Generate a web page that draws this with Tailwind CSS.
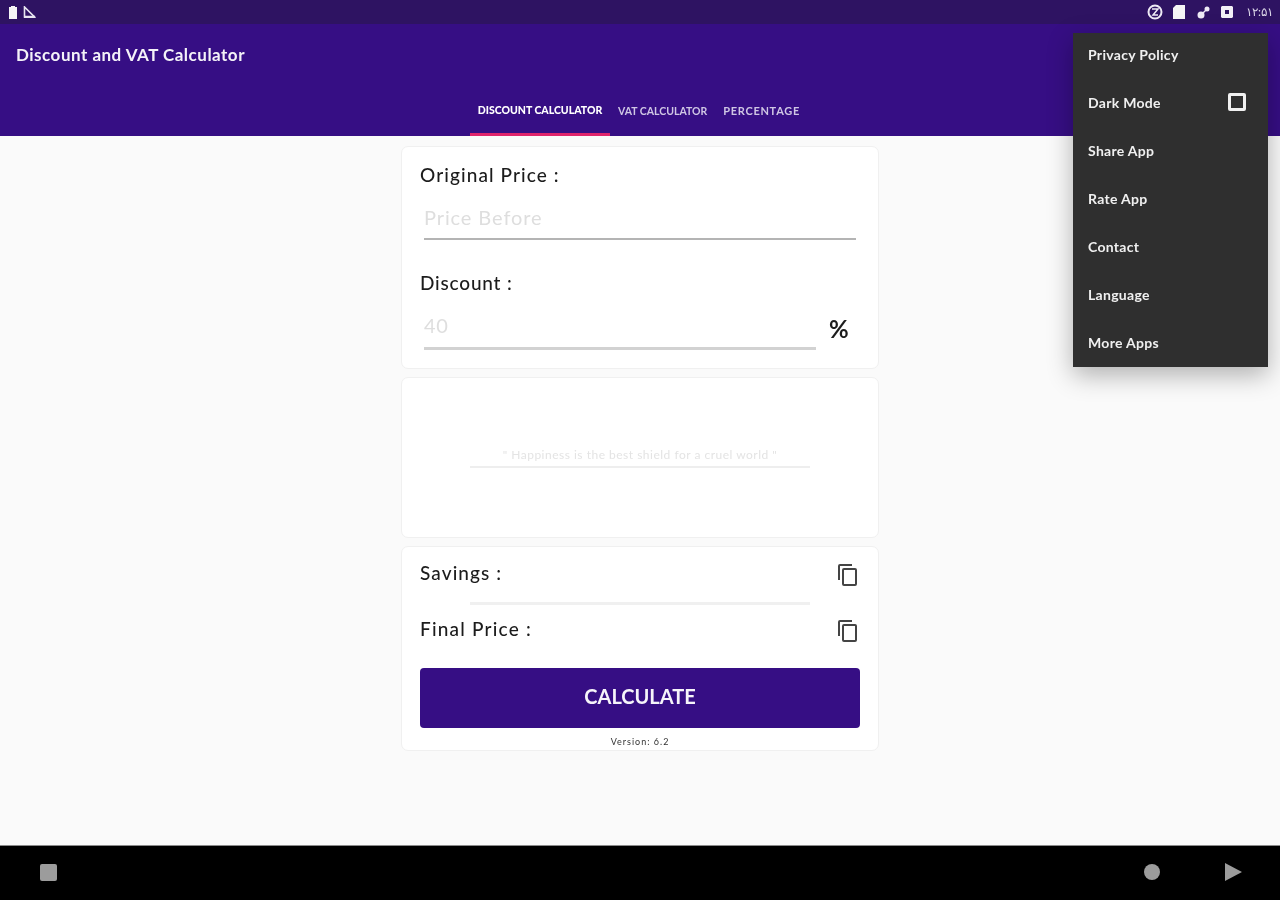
<!DOCTYPE html>
<html lang="en">
  <head>
    <meta charset="UTF-8" />
    <meta name="viewport" content="width=device-width, initial-scale=1.0" />
    <title>Discount and VAT Calculator</title>
    <script src="https://cdn.jsdelivr.net/npm/@tailwindcss/browser@4"></script>
  </head>
  <body class="bg-[#fafafa]">
    <div class="relative w-[1280px] h-[900px] overflow-hidden flex flex-col font-['Lato',sans-serif] blur-[0.5px]">
      <!-- status bar -->
      <div class="h-[24px] bg-[#2e1362] flex items-center justify-between pl-[8px] pr-[7px] text-white">
        <div class="flex items-center gap-[5px]">
          <svg width="10" height="13" viewBox="0 0 10 13" fill="#f5f5f5"><path d="M3 0h4v1h2v12H1V1h2z" /></svg>
          <svg width="13" height="12" viewBox="0 0 13 12" fill="none" stroke="#e8e6f0" stroke-width="1.6"><path d="M1.5 1v10h10z" /><path d="M1 11h11" stroke-width="2.5" /></svg>
        </div>
        <div class="flex items-center">
          <svg width="16" height="16" viewBox="0 0 16 16" fill="none" stroke="#eeeaf5" stroke-width="2"><circle cx="8" cy="8" r="6.5" /><path d="M5 5h6L6 11h5" stroke-width="1.5" /></svg>
          <svg class="ml-[10px]" width="12" height="14" viewBox="0 0 12 14" fill="#f5f5f5"><path d="M3 0h9v14H0V3z" /></svg>
          <svg class="ml-[12px]" width="13" height="13" viewBox="0 0 13 13" fill="#eeeaf5"><circle cx="4" cy="9" r="3.5" /><circle cx="10" cy="3" r="2.5" /><path d="M5 7l4-4 1 1-4 4z" /></svg>
          <svg class="ml-[11px]" width="12" height="12" viewBox="0 0 12 12" fill="#f2f0f7"><path fill-rule="evenodd" d="M1 0h10l1 1v10l-1 1H1l-1-1V1zM4 4v4h4V4z" /></svg>
          <span class="ml-[13px] text-[12px] leading-none text-[#d9d4e6]">۱۲:۵۱</span>
        </div>
      </div>

      <!-- app bar -->
      <div class="h-[112px] bg-[#360e84] flex flex-col shrink-0">
        <div class="h-[62px] pl-[16px] pt-[20px] text-[17px] leading-[22px] tracking-[0.5px] font-bold text-[#f4f2f8]">Discount and VAT Calculator</div>
        <div class="flex pl-[470px] h-[50px]">
          <div class="w-[140px] h-full border-b-[3px] border-[#e0246c] flex items-center justify-center pt-[3px] text-[10.5px] font-black text-white whitespace-nowrap">DISCOUNT CALCULATOR</div>
          <div class="ml-[8px] h-full flex items-center pt-[1px] text-[10.5px] font-bold text-[#cfc6e4] whitespace-nowrap">VAT CALCULATOR</div>
          <div class="ml-[16px] h-full flex items-center pt-[1px] text-[11px] tracking-[0.7px] font-bold text-[#cfc6e4] whitespace-nowrap">PERCENTAGE</div>
        </div>
      </div>

      <!-- content -->
      <div class="flex-1 bg-[#fafafa] flex flex-col items-center pt-[10px] gap-[8px]">
        <div class="w-[478px] h-[223px] bg-white rounded-[7px] border border-[#f0f0f0] flex flex-col pl-[18px] pr-[22px] text-[#1c1c1c]">
          <div class="mt-[15px] text-[19px] leading-[26px] tracking-[1.1px] font-medium">Original Price :</div>
          <div class="ml-[4px] mt-[16px] h-[28px] text-[20px] leading-[26px] tracking-[0.9px] text-[#dedede] border-b-2 border-[#b4b4b4] box-content pb-[6px]">Price Before</div>
          <div class="mt-[30px] text-[19px] leading-[26px] tracking-[0.8px] font-medium">Discount :</div>
          <div class="flex mt-[16px]">
            <div class="w-[392px] ml-[4px] h-[38px] text-[20px] leading-[26px] tracking-[0.6px] text-[#dedede] border-b-[3px] border-[#d2d2d2]">40</div>
            <div class="ml-[13px] mt-[2px] text-[24px] leading-[30px] font-bold text-[#1c1c1c]">%</div>
          </div>
        </div>

        <div class="w-[478px] h-[161px] bg-white rounded-[7px] border border-[#f0f0f0] flex justify-center pt-[69px]">
          <div class="w-[340px] h-[21px] border-b-2 border-[#eeeeee] text-center text-[12px] leading-[16px] tracking-[0.5px] text-[#e4e4e4] whitespace-nowrap">" Happiness is the best shield for a cruel world "</div>
        </div>

        <div class="w-[478px] h-[205px] bg-white rounded-[7px] border border-[#f0f0f0] flex flex-col px-[18px] text-[#1c1c1c]">
          <div class="flex justify-between items-center mt-[12px] h-[28px]">
            <div class="text-[19px] tracking-[1.1px] font-medium">Savings :</div>
            <svg class="mt-[3px]" width="24" height="24" viewBox="0 0 24 24" fill="#444"><path d="M16 1H4a2 2 0 0 0-2 2v14h2V3h12zm3 4H8a2 2 0 0 0-2 2v14a2 2 0 0 0 2 2h11a2 2 0 0 0 2-2V7a2 2 0 0 0-2-2zm0 16H8V7h11z" /></svg>
          </div>
          <div class="mx-[50px] mt-[15px] h-[3px] bg-[#f0f0f0]"></div>
          <div class="flex justify-between items-center mt-[10px] h-[28px]">
            <div class="text-[19px] tracking-[1.2px] font-medium">Final Price :</div>
            <svg class="mt-[3px]" width="24" height="24" viewBox="0 0 24 24" fill="#444"><path d="M16 1H4a2 2 0 0 0-2 2v14h2V3h12zm3 4H8a2 2 0 0 0-2 2v14a2 2 0 0 0 2 2h11a2 2 0 0 0 2-2V7a2 2 0 0 0-2-2zm0 16H8V7h11z" /></svg>
          </div>
          <div class="mt-[25px] h-[60px] rounded-[4px] bg-[#360e84] flex items-center justify-center pb-[4px] text-[20px] font-bold text-[#f6f4fa]">CALCULATE</div>
          <div class="mt-[8px] text-center text-[9px] leading-[12px] tracking-[1px] text-[#333]">Version: 6.2</div>
        </div>
      </div>

      <!-- nav bar -->
      <div class="h-[55px] bg-black flex items-center shrink-0 border-t border-[#8a8a8a] pb-[2px]">
        <div class="ml-[40px] w-[17px] h-[17px] rounded-[2px] bg-[#9c9c9c]"></div>
        <div class="ml-auto w-[16px] h-[16px] rounded-full bg-[#9c9c9c]"></div>
        <svg class="ml-[65px] mr-[38px]" width="17" height="18" viewBox="0 0 17 18" fill="#9c9c9c"><path d="M0 0l17 9-17 9z" /></svg>
      </div>

      <!-- overflow menu -->
      <div class="absolute left-[1073px] top-[33px] w-[195px] h-[334px] bg-[#2f2f2f] shadow-[0_8px_24px_rgba(0,0,0,0.3)] flex flex-col text-[14px] tracking-[0.3px] font-bold text-[#f0f0f0]">
        <div class="h-[48px] flex items-center px-[15px] shrink-0 mt-[-3px]">Privacy Policy</div>
        <div class="h-[48px] flex items-center justify-between pl-[15px] pr-[22px] shrink-0">
          <span>Dark Mode</span>
          <span class="w-[18px] h-[18px] rounded-[2px] border-[3px] border-[#f0f0f0]"></span>
        </div>
        <div class="h-[48px] flex items-center px-[15px] shrink-0">Share App</div>
        <div class="h-[48px] flex items-center px-[15px] shrink-0">Rate App</div>
        <div class="h-[48px] flex items-center px-[15px] shrink-0">Contact</div>
        <div class="h-[48px] flex items-center px-[15px] shrink-0">Language</div>
        <div class="h-[48px] flex items-center px-[15px] shrink-0">More Apps</div>
      </div>
    </div>
  </body>
</html>
